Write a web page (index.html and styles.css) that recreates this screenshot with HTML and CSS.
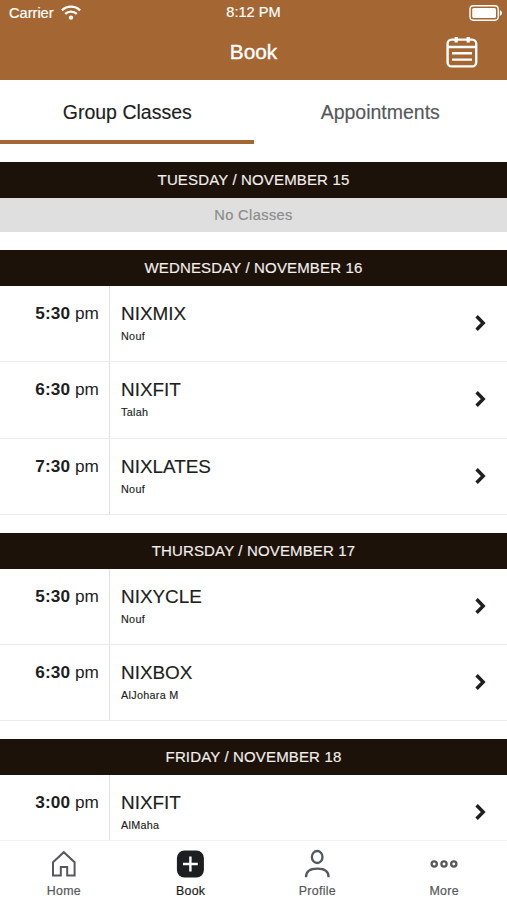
FILE: index.html
```
<!DOCTYPE html>
<html lang="en">
<head>
    <meta charset="UTF-8">
    <meta name="viewport" content="width=device-width, initial-scale=1.0">
    <title>Book</title>
    <link rel="stylesheet" href="styles.css">
</head>
<body>

    <!-- Shared icons -->
    <svg class="icon-defs" width="0" height="0">
        <symbol id="chevron" viewBox="0 0 12 18">
            <path d="M1.6 2.3 L8.2 9 L1.6 15.7" fill="none" stroke="#1c1e20" stroke-width="3.4"/>
        </symbol>
    </svg>

    <header>
        <div class="status-bar">
            <div class="carrier">
                <span>Carrier</span>
                <svg width="20" height="15" viewBox="0 0 20 15" fill="none" stroke="#fff" stroke-width="2.3">
                    <path d="M0.9 5.4 A13 13 0 0 1 19.1 5.4"/>
                    <path d="M4.2 8.9 A8.3 8.3 0 0 1 15.8 8.9"/>
                    <circle cx="10" cy="12.6" r="2.2" fill="#fff" stroke="none"/>
                </svg>
            </div>
            <span class="clock">8:12 PM</span>
            <svg class="battery" width="34" height="16" viewBox="0 0 34 16">
                <rect x="1" y="0.8" width="28.2" height="14.4" rx="3.4" fill="none" stroke="#fff" stroke-width="1.4"/>
                <rect x="3.2" y="3" width="23.8" height="10" rx="1.5" fill="#fff"/>
                <path d="M30.8 5 Q33 6 33 8 Q33 10 30.8 11 Z" fill="#fff"/>
            </svg>
        </div>
        <div class="title-bar">
            <h1>Book</h1>
            <svg class="calendar" width="32" height="32" viewBox="0 0 32 32" fill="none" stroke="#fff" stroke-width="2.4">
                <rect x="1.6" y="3.6" width="28.6" height="26.8" rx="4"/>
                <path d="M2 11 H30 M6 17.2 H26 M6 23.6 H26"/>
                <path d="M10.2 1 V6.6 M22.2 1 V6.6" stroke-width="3.2"/>
            </svg>
        </div>
    </header>

    <nav class="tabs">
        <a class="tab active">Group Classes</a>
        <a class="tab">Appointments</a>
    </nav>

    <main>
        <section class="day">
            <h2>TUESDAY / NOVEMBER 15</h2>
            <p class="empty">No Classes</p>
        </section>

        <section class="day">
            <h2>WEDNESDAY / NOVEMBER 16</h2>
            <div class="class-row">
                <div class="time"><strong>5:30</strong> pm</div>
                <div class="info">
                    <h3>NIXMIX</h3>
                    <p>Nouf</p>
                </div>
                <svg class="chevron"><use href="#chevron"/></svg>
            </div>
            <div class="class-row">
                <div class="time"><strong>6:30</strong> pm</div>
                <div class="info">
                    <h3>NIXFIT</h3>
                    <p>Talah</p>
                </div>
                <svg class="chevron"><use href="#chevron"/></svg>
            </div>
            <div class="class-row">
                <div class="time"><strong>7:30</strong> pm</div>
                <div class="info">
                    <h3>NIXLATES</h3>
                    <p>Nouf</p>
                </div>
                <svg class="chevron"><use href="#chevron"/></svg>
            </div>
        </section>

        <section class="day">
            <h2>THURSDAY / NOVEMBER 17</h2>
            <div class="class-row">
                <div class="time"><strong>5:30</strong> pm</div>
                <div class="info">
                    <h3>NIXYCLE</h3>
                    <p>Nouf</p>
                </div>
                <svg class="chevron"><use href="#chevron"/></svg>
            </div>
            <div class="class-row">
                <div class="time"><strong>6:30</strong> pm</div>
                <div class="info">
                    <h3>NIXBOX</h3>
                    <p>AlJohara M</p>
                </div>
                <svg class="chevron"><use href="#chevron"/></svg>
            </div>
        </section>

        <section class="day">
            <h2>FRIDAY / NOVEMBER 18</h2>
            <div class="class-row">
                <div class="time"><strong>3:00</strong> pm</div>
                <div class="info">
                    <h3>NIXFIT</h3>
                    <p>AlMaha</p>
                </div>
                <svg class="chevron"><use href="#chevron"/></svg>
            </div>
        </section>
    </main>

    <nav class="bottom-nav">
        <a class="nav-item">
            <svg width="30" height="30" viewBox="0 0 30 30" fill="none" stroke="#55585c" stroke-width="2">
                <path d="M5 13.2 L15.8 3.2 L26.6 13.2 V26.4 H19.2 V18 H12.8 V26.4 H5 Z"/>
            </svg>
            <span>Home</span>
        </a>
        <a class="nav-item active">
            <svg width="30" height="30" viewBox="0 0 30 30">
                <rect x="1.9" y="1.5" width="27" height="27" rx="7.5" fill="#1c1e21"/>
                <path d="M15.4 7.6 V22.4 M8 15 H22.8" stroke="#fff" stroke-width="2.4"/>
            </svg>
            <span>Book</span>
        </a>
        <a class="nav-item">
            <svg width="30" height="30" viewBox="0 0 30 30" fill="none" stroke="#55585c" stroke-width="2.3">
                <ellipse cx="15.2" cy="8" rx="5.3" ry="6"/>
                <path d="M4 28.2 C4 22 7.8 19.6 15.3 19.6 C22.8 19.6 26.6 22 26.6 28.2"/>
            </svg>
            <span>Profile</span>
        </a>
        <a class="nav-item">
            <svg width="30" height="30" viewBox="0 0 30 30" fill="none" stroke="#55585c" stroke-width="2.3">
                <circle cx="5.2" cy="15" r="2.6"/>
                <circle cx="15" cy="15" r="2.6"/>
                <circle cx="24.8" cy="15" r="2.6"/>
            </svg>
            <span>More</span>
        </a>
    </nav>

</body>
</html>
```
FILE: styles.css
```
* {
    box-sizing: border-box;
}

body {
    margin: 0;
    height: 100vh;
    display: flex;
    flex-direction: column;
    overflow: hidden;
    background-color: #fff;
    color: #1c1e21;
    font-family: "Liberation Sans", Arial, sans-serif;
}

h1, h2, h3, p {
    margin: 0;
    font-weight: normal;
}

.icon-defs {
    position: absolute;
}

/* --- Header --- */
header {
    flex: none;
    height: 80px;
    background-color: #a46733;
    color: #fff;
}

.status-bar {
    display: grid;
    grid-template-columns: 1fr auto 1fr;
    align-items: center;
    height: 25px;
    padding: 0 4px 0 9px;
    font-size: 14.6px;
    -webkit-text-stroke: 0.2px #fff;
}

.carrier {
    display: flex;
    align-items: center;
    gap: 7px;
}

.clock {
    margin-right: 5px;
    line-height: 25px;
}

.battery {
    justify-self: end;
}

.title-bar {
    display: grid;
    grid-template-columns: 1fr auto 1fr;
    align-items: center;
    height: 54px;
    padding-right: 29px;
    padding-left: 29px;
}

h1 {
    grid-column: 2;
    font-size: 20.8px;
    -webkit-text-stroke: 0.4px #fff;
}

.calendar {
    justify-self: end;
}

/* --- Tabs --- */
.tabs {
    flex: none;
    display: grid;
    grid-template-columns: 1fr 1fr;
    height: 64px;
}

.tab {
    color: #55585c;
    font-size: 19.5px;
    line-height: 64px;
    text-align: center;
    -webkit-text-stroke: 0.15px;
}

.tab.active {
    padding-left: 1px;
    box-shadow: inset 0 -4px #a46733;
    color: #1c1e21;
}

/* --- Schedule --- */
main {
    flex: 1;
    min-height: 0;
    overflow: hidden;
    padding-top: 18px;
}

.day {
    margin-bottom: 18px;
}

h2 {
    height: 36.1px;
    background-color: #1d120a;
    color: #f3efec;
    font-size: 15px;
    letter-spacing: 0.15px;
    line-height: 36px;
    text-align: center;
    -webkit-text-stroke: 0.15px;
}

.empty {
    height: 34px;
    background-color: #dfdfdf;
    color: #8b8b8b;
    font-size: 14.6px;
    letter-spacing: 0.4px;
    line-height: 34px;
    text-align: center;
    -webkit-text-stroke: 0.2px;
}

.class-row {
    display: flex;
    height: 76.2px;
    border-bottom: 1px solid #eaecee;
}

.time {
    width: 110px;
    padding: 18px 10px 0 0;
    border-right: 1px solid #dfe1e4;
    font-size: 17.2px;
    letter-spacing: 0.1px;
    line-height: 19px;
    text-align: right;
}

.info {
    flex: 1;
    padding: 17px 0 0 11px;
}

.info h3 {
    font-size: 18.9px;
    line-height: 22px;
    -webkit-text-stroke: 0.15px;
}

.info p {
    margin-top: 5px;
    font-size: 10.8px;
    letter-spacing: 0.3px;
    line-height: 12px;
    -webkit-text-stroke: 0.15px;
}

.chevron {
    width: 12px;
    height: 18px;
    margin: 28px 20px 0 0;
}

/* --- Bottom navigation --- */
.bottom-nav {
    flex: none;
    display: grid;
    grid-template-columns: repeat(4, 1fr);
    height: 60px;
    border-top: 1px solid #f0f1f2;
    background-color: #fff;
}

.nav-item {
    display: flex;
    flex-direction: column;
    align-items: center;
    padding-top: 8px;
    color: #55585c;
    font-size: 12.4px;
    letter-spacing: 0.3px;
    -webkit-text-stroke: 0.2px;
}

.nav-item span {
    margin: 5px 0 0 1px;
}

.nav-item.active {
    color: #1c1e21;
}
```
